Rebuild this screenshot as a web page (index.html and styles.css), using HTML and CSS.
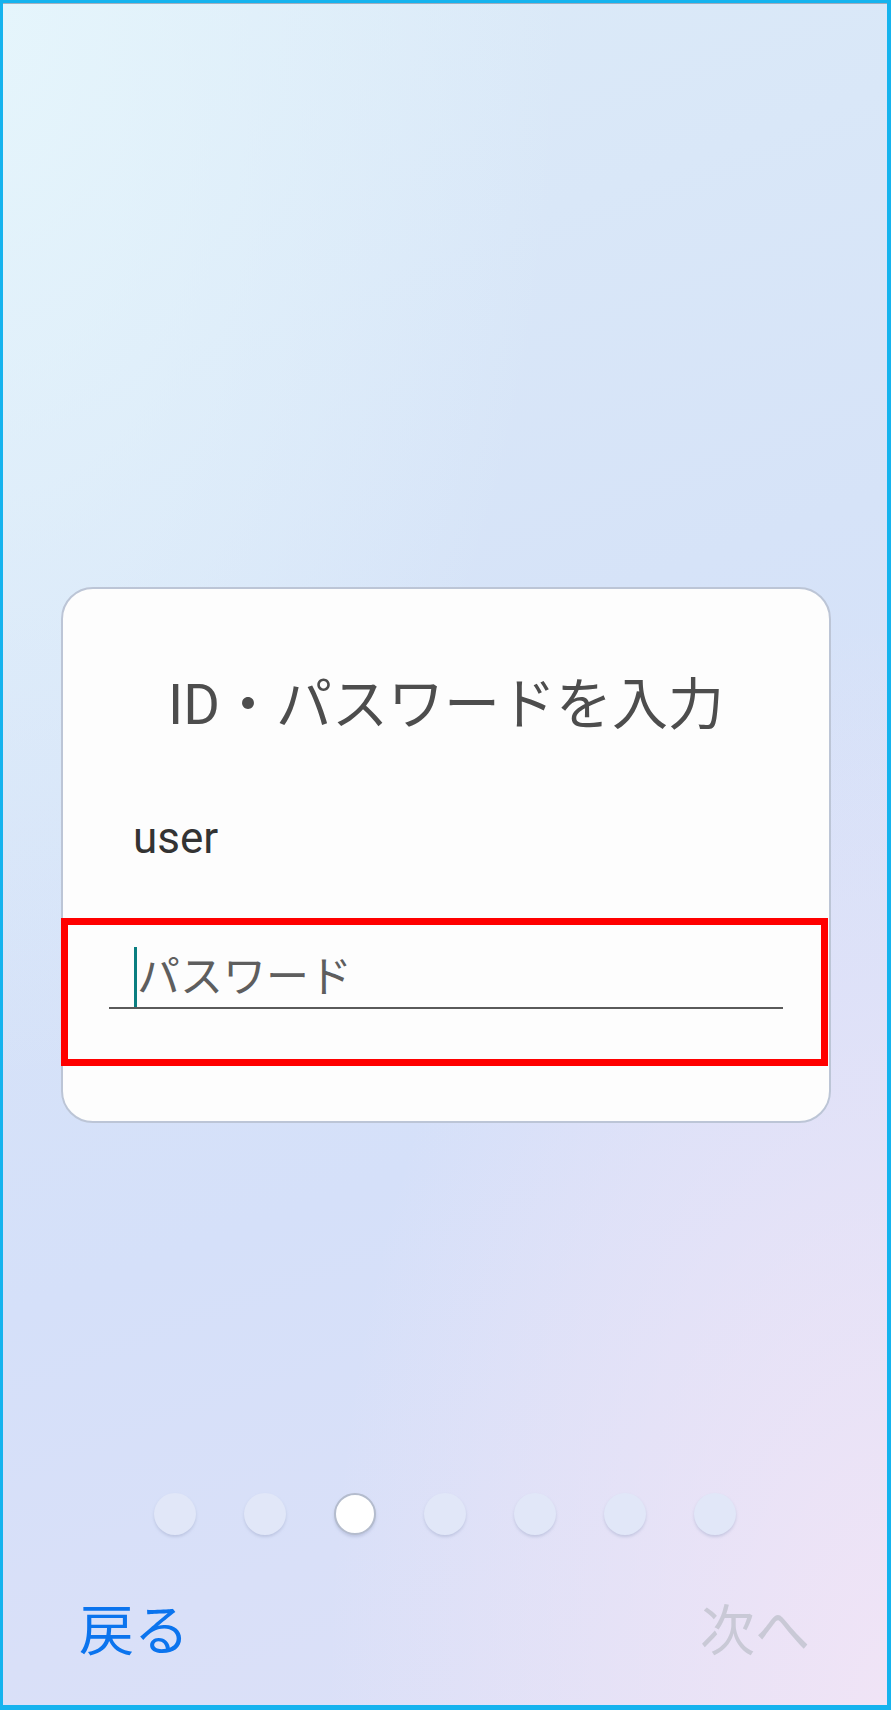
FILE: index.html
```html
<!DOCTYPE html>
<html lang="ja">
<head>
    <meta charset="UTF-8">
    <meta name="viewport" content="width=device-width, initial-scale=1.0">
    <title>ID・パスワードを入力</title>
    <link rel="stylesheet" href="styles.css">
</head>
<body>
<div class="screen">

    <div class="card">
        <h1 class="card-title">ID・パスワードを入力</h1>
        <div class="user-id">user</div>

        <!-- password field, highlighted -->
        <div class="field-box">
            <div class="field">
                <span class="caret"></span>
                <span class="placeholder">パスワード</span>
            </div>
        </div>
    </div>

    <div class="dots">
        <span class="dot"></span>
        <span class="dot"></span>
        <span class="dot active"></span>
        <span class="dot"></span>
        <span class="dot"></span>
        <span class="dot"></span>
        <span class="dot"></span>
    </div>

    <div class="nav">
        <span class="nav-back">戻る</span>
        <span class="nav-next">次へ</span>
    </div>

</div>
</body>
</html>
```

FILE: styles.css
```css
html, body {
    margin: 0;
    padding: 0;
}

body {
    font-family: Roboto, "Noto Sans CJK JP", sans-serif;
    background: #ffffff;
}

.screen {
    box-sizing: border-box;
    width: 891px;
    height: 1710px;
    display: flex;
    flex-direction: column;
    border-style: solid;
    border-color: #15b3ee;
    border-width: 3px 4px 5px 3px;
    box-shadow: inset 0 1px 0 rgba(110, 120, 140, 0.55);
    background:
        radial-gradient(ellipse at 0% 0%, rgba(230, 246, 252, 0.9) 0%, rgba(230, 246, 252, 0) 45%),
        radial-gradient(ellipse at 100% 100%, rgba(240, 228, 246, 1) 0%, rgba(240, 228, 246, 0) 45%),
        linear-gradient(160deg, #dcebf8 0%, #d6e3f8 40%, #d5e0f9 65%, #dde0f7 100%);
}

.card {
    box-sizing: border-box;
    width: 770px;
    height: 536px;
    margin: 584px 0 0 58px;
    background: #fdfdfd;
    border: 2px solid #bcc5d6;
    border-radius: 32px;
}

.card-title {
    margin: 81px 0 0;
    font-size: 56px;
    font-weight: 400;
    line-height: 70px;
    text-align: center;
    color: #4d4d4d;
}

.user-id {
    margin: 72px 0 0 70px;
    font-size: 44px;
    line-height: 52px;
    color: #333333;
}

.field-box {
    box-sizing: border-box;
    width: 767px;
    height: 148px;
    margin: 54px 0 0 -2px;
    border: 7px solid #ff0000;
}

.field {
    display: flex;
    align-items: flex-end;
    width: 674px;
    height: 82px;
    margin-left: 41px;
    border-bottom: 2px solid #5a5a5a;
}

.caret {
    width: 3px;
    height: 60px;
    margin-left: 25px;
    background: #0a7e80;
}

.placeholder {
    font-size: 43px;
    line-height: 43px;
    margin-bottom: 8px;
    color: #5e5e5e;
}

.dots {
    display: flex;
    justify-content: center;
    gap: 48px;
    margin-top: 370px;
}

.dot {
    box-sizing: border-box;
    width: 42px;
    height: 42px;
    border-radius: 50%;
    background: #e1e7f8;
    box-shadow: 0 2px 3px rgba(150, 160, 195, 0.4);
}

.dot.active {
    background: #ffffff;
    border: 2px solid #b4bccd;
}

.nav {
    display: flex;
    justify-content: space-between;
    align-items: center;
    margin-top: 64px;
    padding: 0 77px 0 76px;
    font-size: 55px;
    line-height: 64px;
}

.nav-back {
    color: #0b74ee;
}

.nav-next {
    color: #c9c9d6;
}
```
